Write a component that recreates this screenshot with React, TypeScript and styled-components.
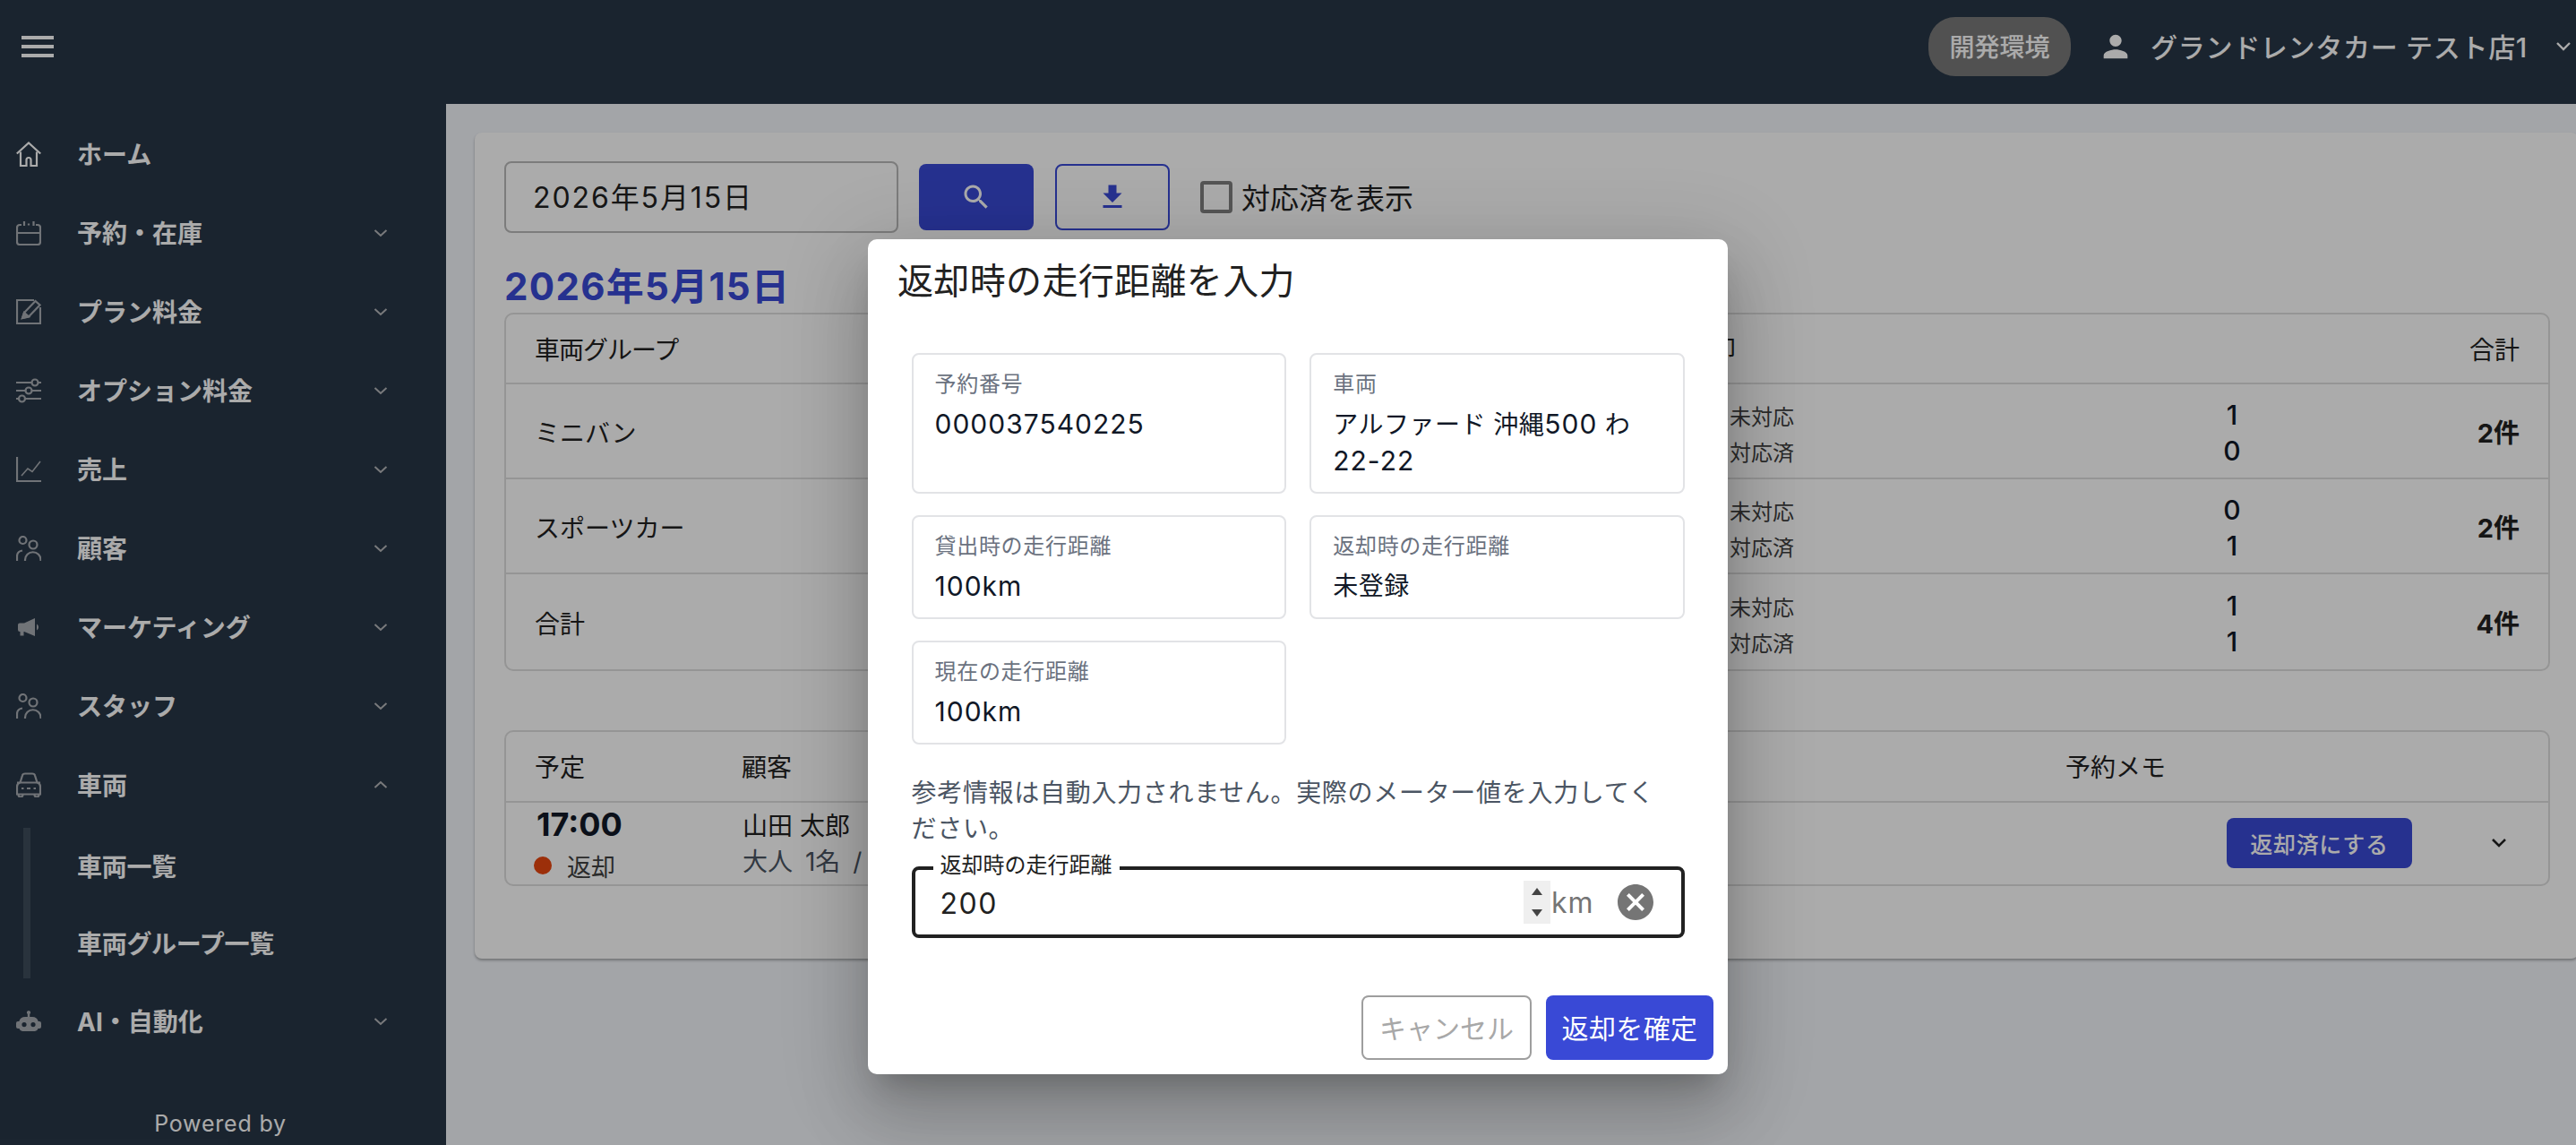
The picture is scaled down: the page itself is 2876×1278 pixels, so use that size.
import React from "react";
import styled, { createGlobalStyle } from "styled-components";

const FONT = `Inter, "Noto Sans CJK JP", sans-serif`;

const Global = createGlobalStyle`
  html, body { margin: 0; padding: 0; width: 2876px; height: 1278px; overflow: hidden; }
  body { font-family: ${FONT}; color: #212121; }
  * { box-sizing: border-box; }
`;

const Page = styled.div`
  width: 2876px; height: 1278px; display: flex; flex-direction: column;
  overflow: hidden; position: relative; background: #f3f6fb;
`;
const TopBar = styled.header`
  height: 116px; flex: none; background: #283747; color: #fff;
  display: flex; align-items: center; padding: 0 5px 12px 24px;
`;
const Burger = styled.div`
  width: 36px; display: flex; flex-direction: column; gap: 6px;
  span { display: block; height: 4px; background: #fff; }
`;
const EnvPill = styled.div`
  margin-left: auto; width: 159px; height: 66px; border-radius: 30px; background: #7a7a7a; padding-bottom: 2px;
  display: flex; align-items: center; justify-content: center; font-size: 28px; font-weight: 500;
`;
const UserIcon = styled.svg`
  width: 40px; height: 40px; margin-left: 30px; fill: #fff; flex: none;
`;
const UserName = styled.div`
  margin-left: 19px; padding-bottom: 2px; font-size: 30px; font-weight: 500; letter-spacing: 0.7px; white-space: nowrap;
`;
const UserCaret = styled.svg`
  width: 24px; height: 24px; margin-left: 28px; margin-right: -3px; fill: none; stroke: #fff; stroke-width: 2.4; flex: none;
`;
const Body = styled.div`
  flex: 1; display: flex; min-height: 0;
`;
const Sidebar = styled.nav`
  width: 498px; flex: none; background: #283747; padding-top: 12px; display: flex; flex-direction: column; overflow: hidden;
`;
const NavRow = styled.div`
  height: 88px; flex: none; display: flex; align-items: center; padding: 0 65px 0 18px;
  color: #fff; font-size: 28px; font-weight: 700; line-height: 1;
`;
const NavLabel = styled.span`
  padding-top: 2px;
`;
const NavIcon = styled.svg<{ $bright?: boolean }>`
  width: 28px; height: 28px; flex: none; margin-right: 40px; fill: none;
  stroke: ${p => (p.$bright ? "#ffffff" : "#a8acb2")}; color: ${p => (p.$bright ? "#ffffff" : "#a8acb2")}; stroke-width: 2.2;
`;
const NavCaret = styled.svg`
  width: 16px; height: 12px; margin-left: auto; fill: none; stroke: #b5b7ba; stroke-width: 2; flex: none;
`;
const SubGroup = styled.div`
  margin: 4px 0 4px 26px; border-left: 8px solid #3e4c5c; display: flex; flex-direction: column; gap: 4px;
`;
const SubRow = styled.div`
  height: 82px; display: flex; align-items: center; padding: 2px 0 0 52px; color: #fff; font-size: 28px; font-weight: 700; letter-spacing: -0.3px;
`;
const Powered = styled.div`
  margin-top: 52px; text-align: center; padding-right: 6px; color: #fff; font-size: 25px; line-height: 36px; letter-spacing: 0.8px;
`;
const Main = styled.main`
  flex: 1; min-width: 0; padding: 32px 0 0 32px; overflow: hidden;
`;
const Card = styled.section`
  width: 2349px; height: 922px; background: #fff; border-radius: 8px; padding: 32px 32px 0 33px;
  box-shadow: 0 2px 3px rgba(0,0,0,.3);
`;
const FilterRow = styled.div`
  height: 80px; display: flex; align-items: center;
`;
const DateField = styled.div`
  width: 440px; height: 80px; border: 2px solid #b9b9b9; border-radius: 8px; display: flex; align-items: center;
  padding: 0 0 5px 30px; font-size: 32px; color: #212121; letter-spacing: 1.9px;
`;
const SearchButton = styled.div`
  width: 128px; height: 74px; margin-left: 23px; border-radius: 8px; background: #3949d6;
  display: flex; align-items: center; justify-content: center;
  svg { width: 36px; height: 36px; fill: #fff; }
`;
const DownloadButton = styled.div`
  width: 128px; height: 74px; margin-left: 24px; border-radius: 8px; border: 2px solid #3949d6;
  display: flex; align-items: center; justify-content: center;
  svg { width: 36px; height: 36px; fill: #3949d6; }
`;
const CheckBox = styled.div`
  width: 36px; height: 36px; margin-left: 34px; border: 4px solid #7f7f7f; border-radius: 4px; flex: none;
`;
const CheckLabel = styled.div`
  margin-left: 10px; padding-bottom: 3px; font-size: 32px; color: #212121;
`;
const Heading = styled.h1`
  margin: 32px 0 1px; font-size: 42px; font-weight: 700; line-height: 56px; color: #3949d6; letter-spacing: 1.3px;
`;
const Table = styled.div<{ $top?: number }>`
  border: 2px solid #dedede; border-radius: 10px; margin-top: ${p => p.$top ?? 0}px;
`;
const SummaryHead = styled.div`
  height: 78px; display: grid; grid-template-columns: 1285px 1fr auto; align-items: center; padding: 0 32px;
  font-size: 28px; border-bottom: 2px solid #dedede;
`;
const TightLabel = styled.span`
  letter-spacing: -1px;
`;
const SummaryRow = styled.div<{ $last?: boolean }>`
  height: 106px; display: grid; grid-template-columns: 1285px 1fr auto; align-items: center; padding: 0 32px;
  font-size: 28px; border-bottom: ${p => (p.$last ? "none" : "2px solid #dedede")};
`;
const RowName = styled.span`
  padding-top: 2px;
`;
const CountStack = styled.div`
  display: flex; flex-direction: column; padding: 4px 0 0 49px;
`;
const CountLine = styled.div`
  height: 40px; display: flex; align-items: center;
`;
const CountLabel = styled.span`
  width: 72px; font-size: 24px; color: #414141; flex: none;
`;
const CountValue = styled.span`
  width: 60px; margin-left: 459px; text-align: center; font-size: 30px; font-weight: 500; color: #111827;
`;
const Total = styled.div`
  font-size: 29px; font-weight: 700; text-align: right;
`;
const ListHead = styled.div`
  height: 79px; display: grid; grid-template-columns: 231px 1478px 1fr; align-items: center; padding: 0 0 2px 32px;
  font-size: 28px; border-bottom: 2px solid #dedede;
`;
const ListRow = styled.div`
  height: 91px; display: grid; grid-template-columns: 231px 1478px 1fr; padding-left: 33px;
`;
const TimeCell = styled.div`
  display: flex; flex-direction: column;
`;
const TimeText = styled.div`
  font-size: 36px; font-weight: 700; line-height: 44px; color: #111827; padding: 2px 0 0 1px;
`;
const StatusLine = styled.div`
  margin-top: 6px; height: 36px; display: flex; align-items: center; gap: 17px; font-size: 27px; color: #414141; margin-left: -2px;
`;
const StatusDot = styled.span`
  width: 20px; height: 20px; border-radius: 50%; background: #e94610;
`;
const NameCell = styled.div`
  padding-top: 6px; font-size: 28px; line-height: 40px; white-space: nowrap;
`;
const Guests = styled.div`
  color: #4b5563; word-spacing: 6px;
`;
const ActionCell = styled.div`
  display: flex; align-items: center; height: 93px; padding-bottom: 4px;
`;
const SmallButton = styled.div`
  margin-left: 179px; width: 207px; height: 56px; border-radius: 8px; background: #3949d6; color: #fff;
  display: flex; align-items: center; justify-content: center; font-size: 25px; font-weight: 500; letter-spacing: 0.7px;
`;
const RowCaret = styled.svg`
  width: 24px; height: 24px; margin-left: 85px; fill: none; stroke: #212121; stroke-width: 2.6;
`;

const Backdrop = styled.div`
  position: absolute; inset: 0; background: rgba(0,0,0,.33); padding: 267px 0 0 969px;
`;
const Modal = styled.div`
  width: 960px; height: 932px; background: #fff; border-radius: 10px; padding-top: 19px;
  box-shadow: 0 22px 30px -14px rgba(0,0,0,.2), 0 48px 76px 6px rgba(0,0,0,.14), 0 18px 92px 16px rgba(0,0,0,.12);
`;
const ModalTitle = styled.h2`
  margin: 0; padding-left: 33px; font-size: 40px; line-height: 56px; font-weight: 400; color: #212121; letter-spacing: 0.35px;
`;
const ModalBody = styled.div`
  margin-top: 52px; padding: 0 48px 0 48.5px;
`;
const InfoGrid = styled.div`
  display: grid; grid-template-columns: 1fr 1fr; gap: 24px 26px;
`;
const InfoCard = styled.div`
  border: 2px solid #e2e3e6; border-radius: 8px; padding: 16px 24px 13px 24px;
`;
const InfoLabel = styled.div`
  font-size: 24px; line-height: 34px; color: #6b7280; letter-spacing: 0.7px;
`;
const InfoValue = styled.div`
  margin-top: 7px; padding-bottom: 1px; font-size: 28px; line-height: 40px; color: #111827; letter-spacing: 0.5px;
`;
const Digits = styled.span`
  font-size: 30px; letter-spacing: 1px;
`;
const Hint = styled.p`
  margin: 34px 0 22px; padding-right: 10px; font-size: 28px; line-height: 40px; color: #4b5563; letter-spacing: 0.7px;
`;
const InputBox = styled.div`
  position: relative; height: 80px; border: 4px solid #212121; border-radius: 8px;
  display: flex; align-items: center; padding: 0 0 0 28px;
`;
const FloatLabel = styled.span`
  position: absolute; left: 20px; top: -17px; padding: 0 8px; background: #fff; font-size: 24px; line-height: 24px; color: #212121;
`;
const InputValue = styled.span`
  flex: 1; font-size: 32px; line-height: 34px; padding-top: 3px; color: #212121; letter-spacing: 1.5px;
`;
const Spinner = styled.div`
  width: 30px; height: 48px; background: #efefef; display: flex; flex-direction: column; align-items: center; justify-content: space-around;
  svg { width: 14px; height: 10px; fill: #444; }
`;
const Unit = styled.span`
  margin-left: 1px; width: 70px; font-size: 32px; color: #757575; letter-spacing: 1px;
`;
const ClearIcon = styled.svg`
  width: 48px; height: 48px; fill: #757575; margin-right: 27px; flex: none;
`;
const Footer = styled.div`
  margin-top: 64px; display: flex; justify-content: flex-end; gap: 16px; padding-right: 16px;
`;
const CancelButton = styled.div`
  width: 190px; height: 72px; border: 2px solid #9e9e9e; border-radius: 8px; color: #a8a8a8; padding-bottom: 2px;
  display: flex; align-items: center; justify-content: center; font-size: 30px;
`;
const ConfirmButton = styled.div`
  width: 187px; height: 72px; border-radius: 8px; background: #3949d6; color: #fff; padding-bottom: 2px;
  display: flex; align-items: center; justify-content: center; font-size: 30px; letter-spacing: 0.4px;
`;

const Down = () => <NavCaret viewBox="0 0 16 12"><path d="M1.5 3 8 9l6.5-6" /></NavCaret>;
const Up = () => <NavCaret viewBox="0 0 16 12"><path d="M1.5 9 8 3l6.5 6" /></NavCaret>;

const icons: Record<string, React.ReactNode> = {
  home: (<><path d="M.8 13.5 14 1.5l13.2 12" /><path d="M5 11.5V27h6.5v-6.5a2.5 2.5 0 0 1 5 0V27H23V11.5" /></>),
  calendar: (<><path d="M6 5H4a3 3 0 0 0-3 3v16a3 3 0 0 0 3 3h20a3 3 0 0 0 3-3V8a3 3 0 0 0-3-3h-2" /><path d="M1 14h26M9 1v5M14 3.5v2M19.5 1v5" /></>),
  edit: (<><path d="M20 1H1v26h26V9" /><path d="m7 21 2-6L21.5 2 26.5 6.5 14 19.5z" /><path d="m7 21 2-6 5 4.5z" fill="currentColor" /></>),
  sliders: (<><path d="M0 5h17.5M24.5 5H28M0 14h10.5M17.5 14H28M0 23h3M10 23h18" /><circle cx="21" cy="5" r="3.5" /><circle cx="14" cy="14" r="3.5" /><circle cx="6.5" cy="23" r="3.5" /></>),
  chart: (<><path d="M1 0v27h27" /><path d="m6 21 7-8 5 3.5L27 5" strokeWidth="1.6" /></>),
  people: (<><circle cx="7.5" cy="5" r="4" /><circle cx="19" cy="10" r="4.5" /><path d="M1 28v-5c0-3.5 2.5-6 6-6.5" /><path d="M10 28v-1a8.7 8.7 0 0 1 17.5 0v1" /></>),
  megaphone: (<g fill="currentColor" stroke="none"><path d="M2 11.5a2 2 0 0 1 2-2h5L21 4v20l-12-5H8.5v4.5h-4V19H4a2 2 0 0 1-2-2z" /><path d="M23 10.5a4 4 0 0 1 2 3.5 4 4 0 0 1-2 3.5z" /></g>),
  car: (<><path d="m4.5 11.5 2.5-8Q7.5 1.5 10 1.5h8q2.5 0 3 2l2.5 8" /><path d="M4.5 11.5H1M27 11.5h-3.5" /><path d="M4.5 11.5h19q3.5 1 3.5 4.5v8.5H1V16q0-3.5 3.5-4.5z" /><path d="M6 18h2.5M12 18h4M19.5 18H22" /><path d="M2.5 24.5V25a2.5 2.5 0 0 0 5 0v-.5M20.5 24.5v.5a2.5 2.5 0 0 0 5 0v-.5" /></>),
  robot: (<path fill="currentColor" stroke="none" fillRule="evenodd" d="M14 2a2.2 2.2 0 0 1 1.2 4V9H18a7 7 0 0 1 6.7 5H26a2 2 0 0 1 2 2v4a2 2 0 0 1-2 2h-1.5a4 4 0 0 1-3.5 3H7a4 4 0 0 1-3.5-3H2a2 2 0 0 1-2-2v-4a2 2 0 0 1 2-2h1.3A7 7 0 0 1 10 9h2.8V6A2.2 2.2 0 0 1 14 2zM9 15a2.6 2.6 0 1 0 0 5.2A2.6 2.6 0 0 0 9 15zm10 0a2.6 2.6 0 1 0 0 5.2 2.6 2.6 0 0 0 0-5.2z" />),
};

const nav: [string, string, boolean][] = [
  ["home", "ホーム", false],
  ["calendar", "予約・在庫", true],
  ["edit", "プラン料金", true],
  ["sliders", "オプション料金", true],
  ["chart", "売上", true],
  ["people", "顧客", true],
  ["megaphone", "マーケティング", true],
  ["people", "スタッフ", true],
];

const Row = ({ icon, label, caret }: { icon: string; label: string; caret?: React.ReactNode }) => (
  <NavRow>
    <NavIcon viewBox="0 0 28 28" $bright={icon === "home"}>{icons[icon]}</NavIcon>
    <NavLabel>{label}</NavLabel>
    {caret}
  </NavRow>
);

const Counts = ({ a, b }: { a: number; b: number }) => (
  <CountStack>
    <CountLine><CountLabel>未対応</CountLabel><CountValue>{a}</CountValue></CountLine>
    <CountLine><CountLabel>対応済</CountLabel><CountValue>{b}</CountValue></CountLine>
  </CountStack>
);

export default function App() {
  return (
    <Page>
      <Global />
      <TopBar>
        <Burger><span /><span /><span /></Burger>
        <EnvPill>開発環境</EnvPill>
        <UserIcon viewBox="0 0 24 24"><path d="M12 12c2.21 0 4-1.79 4-4s-1.79-4-4-4-4 1.79-4 4 1.79 4 4 4zm0 2c-2.67 0-8 1.34-8 4v2h16v-2c0-2.66-5.33-4-8-4z" /></UserIcon>
        <UserName>グランドレンタカー テスト店1</UserName>
        <UserCaret viewBox="0 0 24 24"><path d="m5 8 7 7 7-7" /></UserCaret>
      </TopBar>
      <Body>
        <Sidebar>
          {nav.map(([i, l, c]) => <Row key={l} icon={i} label={l} caret={c ? <Down /> : undefined} />)}
          <Row icon="car" label="車両" caret={<Up />} />
          <SubGroup>
            <SubRow>車両一覧</SubRow>
            <SubRow>車両グループ一覧</SubRow>
          </SubGroup>
          <Row icon="robot" label="AI・自動化" caret={<Down />} />
          <Powered>Powered by</Powered>
        </Sidebar>
        <Main>
          <Card>
            <FilterRow>
              <DateField>2026年5月15日</DateField>
              <SearchButton>
                <svg viewBox="0 0 24 24"><path d="M15.5 14h-.79l-.28-.27C15.41 12.59 16 11.11 16 9.5 16 5.91 13.09 3 9.5 3S3 5.91 3 9.5 5.91 16 9.5 16c1.61 0 3.09-.59 4.23-1.57l.27.28v.79l5 4.99L20.49 19l-4.99-5zm-6 0C7.01 14 5 11.99 5 9.5S7.01 5 9.5 5 14 7.01 14 9.5 11.99 14 9.5 14z" /></svg>
              </SearchButton>
              <DownloadButton>
                <svg viewBox="0 0 24 24"><path d="M19 9h-4V3H9v6H5l7 7 7-7zM5 18v2h14v-2H5z" /></svg>
              </DownloadButton>
              <CheckBox />
              <CheckLabel>対応済を表示</CheckLabel>
            </FilterRow>
            <Heading>2026年5月15日</Heading>
            <Table>
              <SummaryHead><TightLabel>車両グループ</TightLabel><span>返却</span><span>合計</span></SummaryHead>
              <SummaryRow><RowName>ミニバン</RowName><Counts a={1} b={0} /><Total>2件</Total></SummaryRow>
              <SummaryRow><RowName>スポーツカー</RowName><Counts a={0} b={1} /><Total>2件</Total></SummaryRow>
              <SummaryRow $last><RowName>合計</RowName><Counts a={1} b={1} /><Total>4件</Total></SummaryRow>
            </Table>
            <Table $top={66}>
              <ListHead><span>予定</span><span>顧客</span><span>予約メモ</span></ListHead>
              <ListRow>
                <TimeCell>
                  <TimeText>17:00</TimeText>
                  <StatusLine><StatusDot />返却</StatusLine>
                </TimeCell>
                <NameCell>
                  山田 太郎
                  <Guests>大人 1名 / 子供 0名</Guests>
                </NameCell>
                <ActionCell>
                  <SmallButton>返却済にする</SmallButton>
                  <RowCaret viewBox="0 0 24 24"><path d="m5 8 7 7 7-7" /></RowCaret>
                </ActionCell>
              </ListRow>
            </Table>
          </Card>
        </Main>
      </Body>
      <Backdrop>
        <Modal>
          <ModalTitle>返却時の走行距離を入力</ModalTitle>
          <ModalBody>
            <InfoGrid>
              <InfoCard><InfoLabel>予約番号</InfoLabel><InfoValue><Digits>000037540225</Digits></InfoValue></InfoCard>
              <InfoCard><InfoLabel>車両</InfoLabel><InfoValue>アルファード 沖縄<Digits>500</Digits> わ <Digits>22-22</Digits></InfoValue></InfoCard>
              <InfoCard><InfoLabel>貸出時の走行距離</InfoLabel><InfoValue><Digits>100km</Digits></InfoValue></InfoCard>
              <InfoCard><InfoLabel>返却時の走行距離</InfoLabel><InfoValue>未登録</InfoValue></InfoCard>
              <InfoCard><InfoLabel>現在の走行距離</InfoLabel><InfoValue><Digits>100km</Digits></InfoValue></InfoCard>
            </InfoGrid>
            <Hint>参考情報は自動入力されません。実際のメーター値を入力してください。</Hint>
            <InputBox>
              <FloatLabel>返却時の走行距離</FloatLabel>
              <InputValue>200</InputValue>
              <Spinner>
                <svg viewBox="0 0 14 10"><path d="M7 1 13 9H1z" /></svg>
                <svg viewBox="0 0 14 10"><path d="M7 9 1 1h12z" /></svg>
              </Spinner>
              <Unit>km</Unit>
              <ClearIcon viewBox="0 0 24 24"><path d="M12 2C6.47 2 2 6.47 2 12s4.47 10 10 10 10-4.47 10-10S17.53 2 12 2zm5 13.59L15.59 17 12 13.41 8.41 17 7 15.59 10.59 12 7 8.41 8.41 7 12 10.59 15.59 7 17 8.41 13.41 12 17 15.59z" /></ClearIcon>
            </InputBox>
          </ModalBody>
          <Footer>
            <CancelButton>キャンセル</CancelButton>
            <ConfirmButton>返却を確定</ConfirmButton>
          </Footer>
        </Modal>
      </Backdrop>
    </Page>
  );
}
